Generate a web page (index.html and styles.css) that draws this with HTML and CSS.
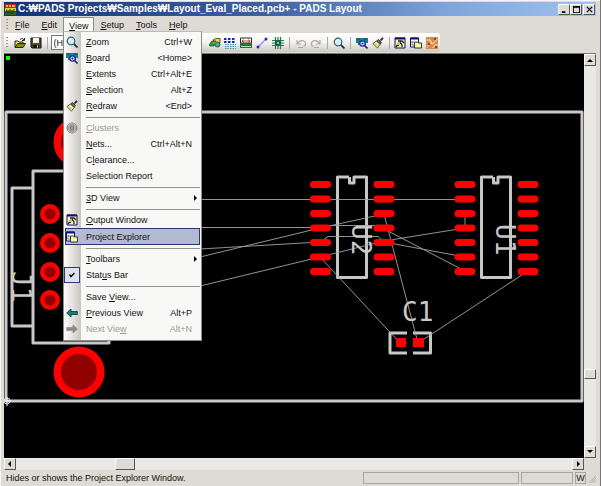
FILE: index.html
```html
<!DOCTYPE html>
<html lang="en">
<head>
<meta charset="utf-8">
<title>PADS Layout</title>
<link rel="stylesheet" href="styles.css">
</head>
<body>
<svg class="defs" aria-hidden="true">
  <symbol id="i-open" viewBox="0 0 12 12"><path d="M1 10V4h3l1 1h4v2" fill="#e8e070" stroke="#222"/><path d="M1 10.500l2.500-4h8L9 10.500z" fill="#8a8a10" stroke="#222"/><path d="M6 2.500c2-1.500 3-1 4 .5M10.500 1v2.500H8" fill="none" stroke="#222"/></symbol>
  <symbol id="i-save" viewBox="0 0 12 12"><path d="M1 1h10v10H2L1 10z" fill="#50501c" stroke="#111"/><path d="M3 1h6v5H3z" fill="#f4f4f4"/><path d="M3 8h6v3H3z" fill="#111"/><path d="M7 8.500h1v2H7z" fill="#fff"/></symbol>
  <symbol id="i-zoom" viewBox="0 0 12 12"><path d="M7.500 7.500l4 4" stroke="#234" stroke-width="1.800"/><circle cx="5" cy="5" r="3.800" fill="#c8f2f6" stroke="#345c6c" stroke-width="1.200"/><path d="M3 4.500Q3.500 3 5 3" fill="none" stroke="#fff"/></symbol>
  <symbol id="i-board" viewBox="0 0 12 12"><path d="M0 1h12v5h-2v2H2V6H0z" fill="#13808a"/><path d="M1 2h3M8 2h3" stroke="#0a5058"/><path d="M8.500 8.500l3 3" stroke="#1a2290" stroke-width="1.600"/><circle cx="6.500" cy="6.500" r="2.700" fill="#d8ecff" stroke="#1a2290" stroke-width="1.200"/><circle cx="6.500" cy="6.500" r="1" fill="#1a2290"/></symbol>
  <symbol id="i-brush" viewBox="0 0 12 12"><path d="M8.500 3.500L11 .8" stroke="#222" stroke-width="1.800"/><path d="M6.500 2.500l3 3-1.500 2-3.500-3.500z" fill="#666" stroke="#222" stroke-width=".8"/><path d="M4.500 4L.8 6.500 5.500 11 8 7.500z" fill="#f7f3a8" stroke="#444420" stroke-width=".9"/><path d="M3 6.500l2.500 2.500" stroke="#99994a" stroke-width=".7"/></symbol>
  <symbol id="i-cluster" viewBox="0 0 12 12"><circle cx="6" cy="6" r="5" fill="#ddd" stroke="#858585"/><path d="M4 3h4v6H4zM4 5h4M4 7h4M2 4v4M10 4v4" fill="#bbb" stroke="#777"/></symbol>
  <symbol id="i-output" viewBox="0 0 12 12"><path d="M1 1h10v10H1z" fill="#f6f3c8" stroke="#101060"/><path d="M1 1.500h10" stroke="#101060" stroke-width="2"/><path d="M2 10l3-4M4 4h4l2 2M6 5l2 3v2M6 6L4 9" stroke="#222" stroke-width="1.300" fill="none"/><path d="M3 6h3v2H3z" fill="#d8ca40"/></symbol>
  <symbol id="i-project" viewBox="0 0 12 12"><path d="M.5 1h8v9h-8z" fill="#fff" stroke="#101070"/><path d="M.5 1.500h8" stroke="#101070" stroke-width="2"/><path d="M2 4v4h2M2 5h2" stroke="#555" fill="none" stroke-width=".8"/><path d="M4.500 5h3l1 1h3v5h-7z" fill="#fff8a0" stroke="#222" stroke-width=".9"/></symbol>
  <symbol id="i-check" viewBox="0 0 12 12"><path d="M3.500 5.500L5 7.500l3.500-3.500" fill="none" stroke="#111" stroke-width="1.500"/></symbol>
  <symbol id="i-prev" viewBox="0 0 12 12"><path d="M.7 6L5 2v2.500h6.300v3H5V10z" fill="#168078" stroke="#123c3a" stroke-width=".9"/></symbol>
  <symbol id="i-next" viewBox="0 0 12 12"><path d="M11.300 6L7 2v2.500H.7v3H7V10z" fill="#8a8a8a" stroke="#8a8a8a" stroke-width=".7"/></symbol>
  <symbol id="i-draft" viewBox="0 0 12 12"><path d="M4 3l3-1.500h4V6L8 7z" fill="#ece020" stroke="#333" stroke-width=".8"/><path d="M0 8l3-4h4L5 9H1z" fill="#16a24a" stroke="#135028" stroke-width=".8"/><circle cx="8.500" cy="7.500" r="2.500" fill="#30b8a0" stroke="#333" stroke-width=".8"/><path d="M4 5h3l-1 2H4z" fill="#e07820"/></symbol>
  <symbol id="i-design" viewBox="0 0 12 12"><g stroke="#1b22c4" stroke-width="1.800" stroke-dasharray="2.500 1.500"><path d="M0 2h12M0 5h12"/></g><g stroke="#38a0b0" stroke-dasharray="1.500 1"><path d="M1 7.500h11M1 9.500h11M1 11.500h11"/></g></symbol>
  <symbol id="i-eco" viewBox="0 0 12 12"><path d="M.5 1h11v5H.5z" fill="#fff" stroke="#2a2a2a"/><path d="M2 4h8M4 2.500L2 4l2 1.500M8 2.500L10 4 8 5.500" stroke="#a22" fill="none" stroke-width=".8"/><path d="M0 6h12v5H0z" fill="#187840"/><path d="M1 9.500h10" stroke="#bde0ad"/></symbol>
  <symbol id="i-route" viewBox="0 0 12 12"><path d="M2 10l8-8" stroke="#8f98de" stroke-width="1.200"/><circle cx="2" cy="10" r="1.500" fill="#2028cc"/><circle cx="10" cy="2" r="1.500" fill="#2028cc"/></symbol>
  <symbol id="i-chip" viewBox="0 0 12 12"><path d="M0 3.500h12M0 6h12M0 8.500h12M3.500 0v12M6 0v12M8.500 0v12" stroke="#287850" stroke-width="1.200"/><path d="M3 3h6v6H3z" fill="#1c6640"/><path d="M5 5h2v2H5z" fill="#84c49c"/></symbol>
  <symbol id="i-undo" viewBox="0 0 12 12"><path d="M2 3v4h4M2.500 6.500C5 2 11 3 10.500 7c0 1-1 2-2 2M3 10.500h5" fill="none" stroke="#aaa" stroke-width="1.200"/></symbol>
  <symbol id="i-redo" viewBox="0 0 12 12"><path d="M10 3v4H6M9.500 6.500C7 2 1 3 1.500 7c0 1 1 2 2 2M4 10.500h5" fill="none" stroke="#aaa" stroke-width="1.200"/></symbol>
  <symbol id="i-router" viewBox="0 0 12 12"><path d="M0 0h12v12H0z" fill="#d98a50"/><path d="M1 10l4-4 2 1 4-5M1 3h3l2 3M7 11l2-3h3" fill="none" stroke="#fff0cf" stroke-width=".9"/><path d="M2 6h2v2H2zM8 1h2v2H8zM9 9h2v2H9z" fill="#97401d"/></symbol>
  <symbol id="s-up" viewBox="0 0 8 8"><path d="M1 6h6L4 3z"/></symbol>
  <symbol id="s-down" viewBox="0 0 8 8"><path d="M1 2h6L4 5z"/></symbol>
  <symbol id="s-left" viewBox="0 0 8 8"><path d="M5 1v6L2 4z"/></symbol>
  <symbol id="s-right" viewBox="0 0 8 8"><path d="M3 1v6l3-3z"/></symbol>
</svg>

<div class="window">
  <header class="titlebar">
    <svg class="app-icon" viewBox="0 0 11 11" aria-hidden="true"><path d="M0 0h11v4H0z" fill="#c9261b"/><path d="M1 2h2M4 2h2M7 2h3" stroke="#f2df50" stroke-width="1.500"/><path d="M0 4h11v3H0z" fill="#e3ce36"/><path d="M0 7h11v4H0z" fill="#2f611d"/><path d="M1 6h1v3h2V6h2v3h2V6h2" stroke="#203510" fill="none"/></svg>
    <h1>C:₩PADS Projects₩Samples₩Layout_Eval_Placed.pcb+ - PADS Layout</h1>
    <div class="caption">
      <button aria-label="Minimize"><svg viewBox="0 0 8 8"><path d="M1 6h4v2H1z"/></svg></button>
      <button aria-label="Maximize"><svg viewBox="0 0 8 8"><path d="M0 0h8v8H0zM1 2v5h6V2z" fill-rule="evenodd"/></svg></button>
      <button class="close" aria-label="Close"><svg viewBox="0 0 8 8"><path d="M1 1l6 6M7 1L1 7" stroke="#000" stroke-width="1.500"/></svg></button>
    </div>
  </header>

  <nav class="menubar">
    <span class="grip"></span>
    <button><u>F</u>ile</button>
    <button><u>E</u>dit</button>
    <div class="dropdown">
      <button class="open" aria-expanded="true"><u>V</u>iew</button>
      <div class="menu" role="menu">
        <button role="menuitem"><svg><use href="#i-zoom"/></svg><span><u>Z</u>oom</span><kbd>Ctrl+W</kbd></button>
        <button role="menuitem"><svg><use href="#i-board"/></svg><span><u>B</u>oard</span><kbd>&lt;Home&gt;</kbd></button>
        <button role="menuitem"><i></i><span><u>E</u>xtents</span><kbd>Ctrl+Alt+E</kbd></button>
        <button role="menuitem"><i></i><span><u>S</u>election</span><kbd>Alt+Z</kbd></button>
        <button role="menuitem"><svg><use href="#i-brush"/></svg><span><u>R</u>edraw</span><kbd>&lt;End&gt;</kbd></button>
        <hr>
        <button role="menuitem" disabled><svg><use href="#i-cluster"/></svg><span><u>C</u>lusters</span></button>
        <button role="menuitem"><i></i><span><u>N</u>ets...</span><kbd>Ctrl+Alt+N</kbd></button>
        <button role="menuitem"><i></i><span>C<u>l</u>earance...</span></button>
        <button role="menuitem"><i></i><span>Selection Report</span></button>
        <hr>
        <button role="menuitem"><i></i><span><u>3</u>D View</span><svg class="sub"><use href="#s-right"/></svg></button>
        <hr>
        <button role="menuitem"><svg><use href="#i-output"/></svg><span><u>O</u>utput Window</span></button>
        <button role="menuitem" class="hot"><svg><use href="#i-project"/></svg><span>Pro<u>j</u>ect Explorer</span></button>
        <hr>
        <button role="menuitem"><i></i><span><u>T</u>oolbars</span><svg class="sub"><use href="#s-right"/></svg></button>
        <button role="menuitemcheckbox" aria-checked="true"><svg class="checked"><use href="#i-check"/></svg><span>Stat<u>u</u>s Bar</span></button>
        <hr>
        <button role="menuitem"><i></i><span>Save <u>V</u>iew...</span></button>
        <button role="menuitem"><svg><use href="#i-prev"/></svg><span><u>P</u>revious View</span><kbd>Alt+P</kbd></button>
        <button role="menuitem" disabled><svg><use href="#i-next"/></svg><span>Next Vie<u>w</u></span><kbd>Alt+N</kbd></button>
      </div>
    </div>
    <button><u>S</u>etup</button>
    <button><u>T</u>ools</button>
    <button><u>H</u>elp</button>
  </nav>

  <div class="toolrow">
    <div class="toolbar" role="toolbar">
      <span class="grip"></span>
      <button aria-label="Open"><svg><use href="#i-open"/></svg></button>
      <button aria-label="Save"><svg><use href="#i-save"/></svg></button>
      <span class="sep"></span>
      <select class="layer" aria-label="Layer"><option>(H) Top</option></select>
      <button aria-label="Drafting"><svg><use href="#i-draft"/></svg></button>
      <button aria-label="Design"><svg><use href="#i-design"/></svg></button>
      <button aria-label="Dimensioning"><svg><use href="#i-eco"/></svg></button>
      <button aria-label="Route"><svg><use href="#i-route"/></svg></button>
      <button aria-label="ECO"><svg><use href="#i-chip"/></svg></button>
      <span class="sep"></span>
      <button aria-label="Undo"><svg><use href="#i-undo"/></svg></button>
      <button aria-label="Redo"><svg><use href="#i-redo"/></svg></button>
      <span class="sep"></span>
      <button aria-label="Zoom"><svg><use href="#i-zoom"/></svg></button>
      <span class="sep"></span>
      <button aria-label="Board"><svg><use href="#i-board"/></svg></button>
      <button aria-label="Redraw"><svg><use href="#i-brush"/></svg></button>
      <span class="sep"></span>
      <button aria-label="Output Window"><svg><use href="#i-output"/></svg></button>
      <button aria-label="Project Explorer"><svg><use href="#i-project"/></svg></button>
      <button aria-label="Router"><svg><use href="#i-router"/></svg></button>
    </div>
  </div>

  <main class="workspace">
    <svg class="board" viewBox="4 54 580 404" preserveAspectRatio="xMinYMin meet" role="img" aria-label="Board layout">
      <defs>
        <g id="pads"><path d="M0 0h14M0 14.500h14M0 29h14M0 43.500h14M0 58h14M0 72.500h14M0 87h14"/></g>
        <g id="pin"><circle r="10" fill="#f00"/><circle r="5.500" fill="#900000"/></g>
        <g id="hole"><circle r="25.500" fill="#f00"/><circle r="18" fill="#900000"/></g>
      </defs>
      <path d="M6 56h4v4H6z" fill="#0f0"/>
      <g fill="none" stroke="#c8c8c8" stroke-width="3" stroke-linejoin="round">
        <path d="M6 112H582V401H6z"/>
        <path d="M109 171H33V343H109z"/>
        <path d="M33 188H12V326H33"/>
        <path d="M349 177H337.500V277.500H366.500V177H354V183H349.500V177"/>
        <path d="M493 177H481.500V277.500H510.500V177H498V183H493.500V177"/>
        <path d="M407 333H390V353H407M413 333H430.500V353H413"/>
      </g>
      <use href="#hole" x="79" y="142"/><use href="#hole" x="79" y="372"/>
      <use href="#pin" x="50" y="214"/><use href="#pin" x="50" y="243"/><use href="#pin" x="50" y="272"/><use href="#pin" x="50" y="300"/>
      <g fill="none" stroke="#a4a4a4" stroke-width=".9">
        <path d="M200 199.500H465M200 227.500H320M200 249L320 242M200 286L320 257L384 241L465 228M200 257L320 228L384 214M328 225.500H384M320 242L328 236.500H378L384 242M384 214L418 343M384 242L465 257M386 230L465 271M465 214V228M320 257L400 343M528 271L418 343"/>
      </g>
      <g stroke="#f00" stroke-width="7" stroke-linecap="round">
        <use href="#pads" x="313.500" y="184.500"/><use href="#pads" x="377" y="184.500"/><use href="#pads" x="458" y="184.500"/><use href="#pads" x="521" y="184.500"/>
      </g>
      <path d="M396 338h10v9h-10zM413 338h11v9h-11z" fill="#f00"/>
      <g class="silk">
        <text transform="translate(352 224) rotate(90)">U2</text>
        <text transform="translate(496 224) rotate(90)">U1</text>
        <text transform="translate(12 271) rotate(90)">J1</text>
        <text x="402" y="321">C1</text>
      </g>
      <circle cx="7" cy="401" r="3" fill="none" stroke="#ddd"/><path d="M3 401h8M7 397v9" stroke="#fff"/>
    </svg>
    <div class="scroll vertical"><button aria-label="Scroll up"><svg><use href="#s-up"/></svg></button><span class="track"></span><span class="thumb"></span><span class="rest"></span><button aria-label="Scroll down"><svg><use href="#s-down"/></svg></button></div>
    <div class="scroll horizontal"><button aria-label="Scroll left"><svg><use href="#s-left"/></svg></button><span class="track"></span><span class="thumb"></span><span class="rest"></span><button aria-label="Scroll right"><svg><use href="#s-right"/></svg></button></div>
  </main>

  <footer class="status">
    <span class="message">Hides or shows the Project Explorer Window.</span>
    <span class="pane wide"></span><span class="pane mid"></span><span class="pane unit">W</span>
    <svg class="sizer" viewBox="0 0 10 12" aria-hidden="true"><path d="M1 12L10 3M4 12l6-6M7 12l3-3" stroke="#999"/></svg>
  </footer>
</div>
</body>
</html>
```

FILE: styles.css
```css
* { box-sizing: border-box; }
body {
  margin: 0;
  background: #dedbd5;
  color: #111;
  font: 9px/12px "Liberation Sans", Arial, sans-serif;
}
.defs { display: none; }
button, select { font: inherit; color: inherit; margin: 0; padding: 0; border: 0; background: none; }
svg { display: block; flex: none; }
u { text-underline-offset: 1px; }

.window {
  height: 100vh;
  display: flex;
  flex-direction: column;
  padding: 2px 4px 0;
  border-right: 1px solid #777;
  background: #dedbd5;
  box-shadow: inset 1px 1px #f6f6f4;
}

.titlebar {
  display: flex;
  align-items: center;
  height: 14px;
  padding: 0 1px;
  background: linear-gradient(90deg, #123278, #3f62a4 45%, #7ea5dc 75%, #a2c2f0);
  color: #fff;
}
.app-icon { width: 11px; height: 11px; }
h1 { flex: 1; margin: 0 0 0 2px; font-size: 10px; line-height: 14px; white-space: nowrap; }
.caption { display: flex; }
.caption button, .scroll button, .thumb {
  display: flex;
  align-items: center;
  justify-content: center;
  background: #dedbd5;
  border: 1px solid;
  border-color: #fff #555 #555 #fff;
}
.caption button { width: 12px; height: 11px; }
.caption svg { width: 7px; height: 7px; }
.caption .close { margin-left: 1px; }

.menubar { display: flex; height: 17px; padding: 1px 0 0 2px; }
.menubar > button, .dropdown > button { height: 16px; padding: 0 6px; }
.grip { width: 2px; height: 12px; align-self: center; background: repeating-linear-gradient(#999 0 1px, transparent 1px 3px); }
.menubar .grip { margin-right: 1px; }
.dropdown { position: relative; }
.dropdown .open { padding: 0 5px; background: #f8f8f7; border: 1px solid #8b8b8b; border-bottom: 0; }

.menu {
  position: absolute;
  z-index: 2;
  top: 14px;
  left: 0;
  width: 139px;
  padding: 2px 1px 3px;
  border: 1px solid #8b8b8b;
  border-top-color: #bbb;
  background: linear-gradient(90deg, #fdfdfc, #c9c6bf 17px, #f8f8f7 17px);
}
.menu button { display: flex; align-items: center; width: 100%; height: 16px; padding-right: 8px; text-align: left; }
.menu svg, .menu i { width: 14px; height: 14px; margin-right: 7px; }
.menu svg { padding: 1px; }
.menu span { flex: 1; }
.menu kbd { font: inherit; }
.menu hr { height: 1px; margin: 3px 0 2px 21px; border: 0; background: #929292; }
.menu button:disabled { color: #989898; }
.menu .hot { height: 17px; background: #b3bad3; outline: 1px solid #2a3a78; outline-offset: -1px; }
.menu .sub { width: 8px; height: 8px; padding: 0; margin: 0 -7px 0 0; }
.menu .checked { background: #dfe2ee; outline: 1px solid #2a3a78; }

.toolrow { height: 21px; padding-bottom: 1px; border-bottom: 1px solid #777; }
.toolbar {
  display: flex;
  align-items: center;
  width: 436px;
  height: 19px;
  padding-left: 2px;
  border-radius: 0 3px 3px 0;
  background: linear-gradient(#fff, #f3f2ef 50%, #ccc9c2);
}
.toolbar button { width: 16px; height: 16px; }
.toolbar button svg { width: 12px; height: 12px; margin: auto; }
.toolbar .grip { margin-right: 4px; }
.sep { width: 1px; height: 12px; margin: 0 3px; background: #aaa; }
.layer { appearance: none; width: 152px; height: 15px; margin-right: 6px; padding-left: 2px; border: 1px solid #777; background: #fff; }

.workspace { flex: 1; min-height: 0; display: grid; grid-template: minmax(0, 1fr) 12px / minmax(0, 1fr) 12px; }
.board { width: 100%; height: 100%; background: #000; }
.silk { fill: #c8c8c8; font: 26px "DejaVu Sans Mono", monospace; }
.scroll { display: flex; background: #e9e8e4; }
.scroll button { width: 12px; height: 12px; }
.scroll svg { width: 8px; height: 8px; }
.vertical { flex-direction: column; }
.vertical .thumb { height: 10px; }
.vertical .track { flex: 82; }
.vertical .rest { flex: 18; }
.horizontal .thumb { width: 20px; }
.horizontal .track { flex: 37; }
.horizontal .rest { flex: 163; }

.status { display: flex; height: 16px; padding: 2px 0 2px 2px; gap: 2px; }
.message { flex: 1; }
.pane { border: 1px solid #a5a5a5; }
.wide { width: 156px; }
.mid { width: 52px; }
.unit { width: 11px; line-height: 10px; text-align: center; }
.sizer { width: 8px; height: 12px; }
```
